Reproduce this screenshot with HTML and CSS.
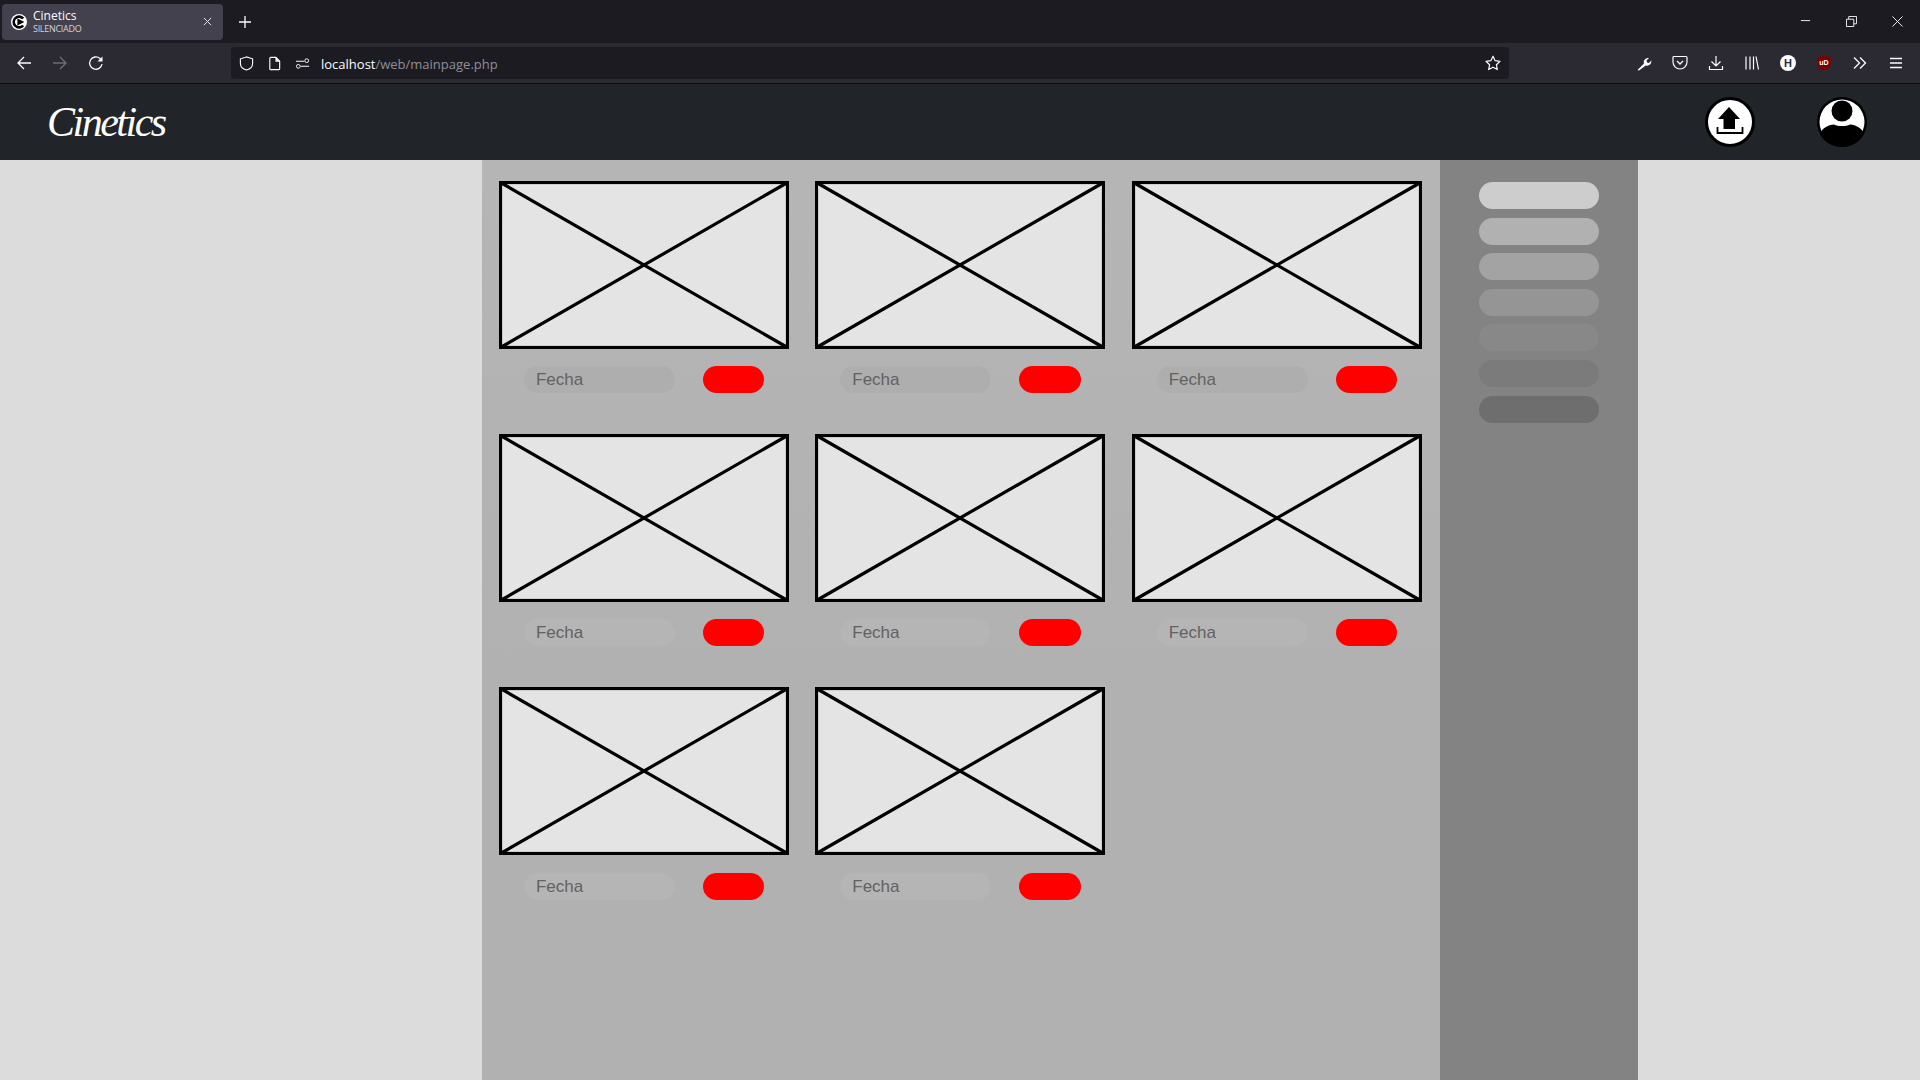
FILE: index.html
```html
<!DOCTYPE html>
<html lang="es">
  <head>
    <meta charset="UTF-8" />
    <title>Cinetics</title>
    <link rel="stylesheet" href="styles.css">
  </head>
  <body>
    <div class="tabbar">
      <div class="tab">
        <svg class="tab-icon" viewBox="0 0 16 16">
          <circle cx="8" cy="8" r="8" fill="#fff"/>
          <path d="M12.200 4.500A5.400 5.400 0 1 0 12.200 11.500" fill="none" stroke="#000" stroke-width="2.600"/>
          <path d="M6.400 4.600 13.400 8 6.400 11.400z" fill="#000"/>
        </svg>
        <div class="tab-text">
          <div class="tab-title">Cinetics</div>
          <div class="tab-sub">SILENCIADO</div>
        </div>
        <svg class="tab-close" viewBox="0 0 10 10"><path d="M1 1 9 9M9 1 1 9" stroke="#e6e6e8" stroke-width="1.100"/></svg>
      </div>
      <svg class="new-tab" viewBox="0 0 12 12"><path d="M6 0v12M0 6h12" stroke="#fbfbfe" stroke-width="1.300"/></svg>
      <div class="window-controls">
        <svg viewBox="0 0 12 12"><path d="M1 5h10" stroke="#fbfbfe" stroke-width="1"/></svg>
        <svg viewBox="0 0 12 12"><path d="M.5 3.500h8v8h-8zM3 3.500V.5h8.500v8H8.500" fill="none" stroke="#fbfbfe" stroke-width="1"/></svg>
        <svg viewBox="0 0 12 12"><path d="M.5.500l11 11M11.500.500l-11 11" stroke="#fbfbfe" stroke-width="1"/></svg>
      </div>
    </div>

    <div class="toolbar">
      <div class="nav-buttons">
        <svg viewBox="0 0 16 16"><path d="M15 8H2M8 2 2 8l6 6" fill="none" stroke="#fbfbfe" stroke-width="1.300"/></svg>
        <svg viewBox="0 0 16 16"><path d="M1 8h13M8 2l6 6-6 6" fill="none" stroke="#6f6e75" stroke-width="1.300"/></svg>
        <svg viewBox="0 0 16 16"><path d="M14 9A6.200 6.200 0 1 1 12 3.500L14 5.500" fill="none" stroke="#fbfbfe" stroke-width="1.300"/><path d="M14.500 1.500v5h-5z" fill="#fbfbfe"/></svg>
      </div>
      <div class="urlbar">
        <svg class="url-icon" viewBox="0 0 16 16"><path d="M8 1 1.500 3v5c0 3.500 3 6 6.500 7 3.500-1 6.500-3.500 6.500-7V3z" fill="none" stroke="#fbfbfe" stroke-width="1.200"/></svg>
        <svg class="url-icon" viewBox="0 0 16 16"><path d="M3 2.500A1 1 0 0 1 4 1.500h5.500l4 4V13.500a1 1 0 0 1-1 1H4a1 1 0 0 1-1-1z" fill="none" stroke="#fbfbfe" stroke-width="1.200"/><path d="M9 1.500h1l3.500 3.500v1H9z" fill="#fbfbfe"/></svg>
        <svg class="url-icon" viewBox="0 0 16 16"><path d="M1 5.500h9M6 11h9" stroke="#fbfbfe" stroke-width="1.100"/><circle cx="12.500" cy="5" r="2" fill="none" stroke="#fbfbfe"/><circle cx="3.500" cy="11" r="2" fill="none" stroke="#fbfbfe"/></svg>
        <div class="url-text"><span class="url-host">localhost</span>/web/mainpage.php</div>
        <svg class="url-star" viewBox="0 0 16 16"><path d="M8 1.200 10.100 5.700 15 6.300 11.400 9.700 12.300 14.600 8 12.200 3.700 14.600 4.600 9.700 1 6.300 5.900 5.700z" fill="none" stroke="#fbfbfe" stroke-width="1.200" stroke-linejoin="round"/></svg>
      </div>
      <div class="tool-icons">
        <svg viewBox="0 0 16 16"><path d="M1.500 15 8 8.500c-1-3 1.500-6 5-5.500L10.500 5.500 11 7.500l2 .5L15.300 5.500c.5 3.500-2.500 6-5.500 5L3 15.500z" fill="#fbfbfe"/></svg>
        <svg viewBox="0 0 16 16"><path d="M2 1.500h12a1 1 0 0 1 1 1V7A7 7 0 0 1 1 7V2.500a1 1 0 0 1 1-1z" fill="none" stroke="#fbfbfe" stroke-width="1.200"/><path d="M5 6l3 3 3-3" fill="none" stroke="#fbfbfe" stroke-width="1.300"/></svg>
        <svg viewBox="0 0 16 16"><path d="M8 1v9.500M3.500 6.500 8 11l4.500-4.500M1.500 11v3.500h13V11" fill="none" stroke="#fbfbfe" stroke-width="1.200"/></svg>
        <svg viewBox="0 0 16 16"><path d="M2 1.500v13M6 1.500v13M9.500 1.500v13M12 1.500l2.500 13" fill="none" stroke="#fbfbfe" stroke-width="1.200"/></svg>
        <div class="h-badge">H</div>
        <div class="ublock">
          <svg viewBox="0 0 16 16"><path d="M8 .5 1.300 2.500v5.500c0 3.500 3 6.300 6.700 7.500 3.700-1.200 6.700-4 6.700-7.500V2.500z" fill="#800000"/></svg>
          <span class="ublock-label">uD</span>
        </div>
        <svg viewBox="0 0 16 16"><path d="M2 2.500 7.500 8 2 13.500M8 2.500 13.500 8 8 13.500" fill="none" stroke="#fbfbfe" stroke-width="1.300"/></svg>
        <svg viewBox="0 0 16 16"><path d="M2 3.500h12M2 8h12M2 12.500h12" stroke="#fbfbfe" stroke-width="1.300"/></svg>
      </div>
    </div>

    <header class="site-header">
      <div class="logo">Cinetics</div>
      <div class="header-actions">
        <a class="round-btn">
          <svg viewBox="0 0 50 50">
            <circle cx="25" cy="25" r="23.500" fill="#fff" stroke="#000" stroke-width="3"/>
            <path d="M24 10 35 22H30V32H18.500V22H13z" fill="#000"/>
            <path d="M12.500 30V36H37.500V30" fill="none" stroke="#000" stroke-width="1.800"/>
          </svg>
        </a>
        <a class="round-btn">
          <svg viewBox="0 0 50 50">
            <circle cx="25" cy="25" r="25" fill="#000"/>
            <circle cx="25" cy="25" r="22.500" fill="#fff"/>
            <circle cx="25" cy="14" r="10.500" fill="#000"/>
            <path d="M3 37C5 31 11 28 17 27.500 21 29.500 29 29.500 33 27.500 39 28 45 31 47 37 43 45 34 50 25 50 16 50 7 45 3 37z" fill="#000"/>
          </svg>
        </a>
      </div>
    </header>

    <div class="page">
      <main class="content">
        <div class="grid">
          <div class="card">
            <svg class="thumb" viewBox="0 0 290 168"><rect x="1.500" y="1.500" width="287" height="165"/><path d="M1.500 1.500 288.500 166.500M288.500 1.500 1.500 166.500"/></svg>
            <div class="card-info"><div class="date-pill">Fecha</div><div class="red-pill"></div></div>
          </div>
          <div class="card">
            <svg class="thumb" viewBox="0 0 290 168"><rect x="1.500" y="1.500" width="287" height="165"/><path d="M1.500 1.500 288.500 166.500M288.500 1.500 1.500 166.500"/></svg>
            <div class="card-info"><div class="date-pill">Fecha</div><div class="red-pill"></div></div>
          </div>
          <div class="card">
            <svg class="thumb" viewBox="0 0 290 168"><rect x="1.500" y="1.500" width="287" height="165"/><path d="M1.500 1.500 288.500 166.500M288.500 1.500 1.500 166.500"/></svg>
            <div class="card-info"><div class="date-pill">Fecha</div><div class="red-pill"></div></div>
          </div>
          <div class="card">
            <svg class="thumb" viewBox="0 0 290 168"><rect x="1.500" y="1.500" width="287" height="165"/><path d="M1.500 1.500 288.500 166.500M288.500 1.500 1.500 166.500"/></svg>
            <div class="card-info"><div class="date-pill">Fecha</div><div class="red-pill"></div></div>
          </div>
          <div class="card">
            <svg class="thumb" viewBox="0 0 290 168"><rect x="1.500" y="1.500" width="287" height="165"/><path d="M1.500 1.500 288.500 166.500M288.500 1.500 1.500 166.500"/></svg>
            <div class="card-info"><div class="date-pill">Fecha</div><div class="red-pill"></div></div>
          </div>
          <div class="card">
            <svg class="thumb" viewBox="0 0 290 168"><rect x="1.500" y="1.500" width="287" height="165"/><path d="M1.500 1.500 288.500 166.500M288.500 1.500 1.500 166.500"/></svg>
            <div class="card-info"><div class="date-pill">Fecha</div><div class="red-pill"></div></div>
          </div>
          <div class="card">
            <svg class="thumb" viewBox="0 0 290 168"><rect x="1.500" y="1.500" width="287" height="165"/><path d="M1.500 1.500 288.500 166.500M288.500 1.500 1.500 166.500"/></svg>
            <div class="card-info"><div class="date-pill">Fecha</div><div class="red-pill"></div></div>
          </div>
          <div class="card">
            <svg class="thumb" viewBox="0 0 290 168"><rect x="1.500" y="1.500" width="287" height="165"/><path d="M1.500 1.500 288.500 166.500M288.500 1.500 1.500 166.500"/></svg>
            <div class="card-info"><div class="date-pill">Fecha</div><div class="red-pill"></div></div>
          </div>
        </div>
      </main>
      <aside class="sidebar">
        <div class="side-pill shade-1"></div>
        <div class="side-pill shade-2"></div>
        <div class="side-pill shade-3"></div>
        <div class="side-pill shade-4"></div>
        <div class="side-pill shade-5"></div>
        <div class="side-pill shade-6"></div>
        <div class="side-pill shade-7"></div>
      </aside>
    </div>
  </body>
</html>
```

FILE: styles.css
```css
html,
body {
  height: 100%;
}
body {
  margin: 0;
  display: flex;
  flex-direction: column;
  overflow: hidden;
  background-color: #dcdcdc;
  font-family: "Liberation Sans", Arial, sans-serif;
}

/* browser chrome */
.tabbar {
  height: 43px;
  flex: none;
  display: flex;
  align-items: center;
  background-color: #1c1b22;
  color: #fbfbfe;
  font-family: "Open Sans", "Noto Sans", sans-serif;
}
.tab {
  width: 221px;
  height: 36px;
  margin-left: 2px;
  box-sizing: border-box;
  padding: 0 11px 0 9px;
  display: flex;
  align-items: center;
  background-color: #42414d;
  border-radius: 4px;
}
.tab-icon {
  width: 16px;
  height: 16px;
  margin-right: 6px;
}
.tab-text {
  flex: 1;
  margin-top: -1px;
}
.tab-title {
  font-size: 12px;
  line-height: 15px;
}
.tab-sub {
  font-size: 9px;
  line-height: 12px;
  color: #d4d4d8;
  letter-spacing: -0.3px;
}
.tab-close {
  width: 9px;
  height: 9px;
}
.new-tab {
  width: 12px;
  height: 12px;
  margin-left: 16px;
}
.window-controls {
  margin-left: auto;
  margin-right: 17px;
  display: flex;
  gap: 35px;
}
.window-controls svg {
  width: 11px;
  height: 11px;
  display: block;
}

.toolbar {
  height: 40px;
  flex: none;
  display: flex;
  align-items: center;
  background-color: #2b2a33;
  border-bottom: 1px solid #0c0c0d;
}
.nav-buttons {
  width: 231px;
  flex: none;
  box-sizing: border-box;
  padding-left: 16px;
  display: flex;
  gap: 20px;
}
.nav-buttons svg {
  width: 16px;
  height: 16px;
  display: block;
}
.urlbar {
  width: 1278px;
  height: 32px;
  flex: none;
  box-sizing: border-box;
  padding: 0 8px;
  display: flex;
  align-items: center;
  gap: 13px;
  background-color: #1c1b22;
  border-radius: 4px;
}
.url-icon {
  width: 15px;
  height: 15px;
  flex: none;
}
.url-text {
  flex: 1;
  margin-left: -2px;
  padding-top: 1px;
  font-family: "Open Sans", "Noto Sans", sans-serif;
  font-size: 13px;
  color: #8f8f94;
}
.url-host {
  color: #fbfbfe;
}
.url-star {
  width: 16px;
  height: 16px;
}
.tool-icons {
  flex: 1;
  padding-left: 127px;
  display: flex;
  align-items: center;
  gap: 20px;
}
.tool-icons svg {
  width: 16px;
  height: 16px;
  display: block;
}
.h-badge {
  width: 16px;
  height: 16px;
  border-radius: 50%;
  background-color: #fbfbfe;
  color: #2b2a33;
  font-size: 11px;
  font-weight: bold;
  line-height: 16px;
  text-align: center;
}
.ublock {
  position: relative;
  width: 16px;
  height: 16px;
}
.ublock-label {
  position: absolute;
  left: 0;
  right: 0;
  top: 3px;
  text-align: center;
  color: #fff;
  font-size: 7px;
  font-weight: bold;
  line-height: 9px;
}

/* site */
.site-header {
  height: 76px;
  flex: none;
  box-sizing: border-box;
  padding: 0 53px 0 47px;
  display: flex;
  align-items: center;
  justify-content: space-between;
  background-color: #212529;
}
.logo {
  font-family: "Liberation Serif", serif;
  font-style: italic;
  font-size: 42px;
  letter-spacing: -2.5px;
  color: #fff;
}
.header-actions {
  display: flex;
  gap: 62px;
}
.round-btn {
  display: block;
  width: 50px;
  height: 50px;
}
.round-btn svg {
  display: block;
  width: 50px;
  height: 50px;
}

.page {
  flex: 1;
  display: flex;
  padding-left: 482px;
  min-height: 0;
}
.content {
  width: 958px;
  box-sizing: border-box;
  padding: 20.8px 0 0 17px;
  background: linear-gradient(#b5b5b5, #b1b1b1 60%);
}
.grid {
  display: grid;
  grid-template-columns: repeat(3, 290px);
  column-gap: 26.4px;
}
.card {
  height: 253.3px;
}
.thumb {
  display: block;
  width: 290px;
  height: 168px;
  fill: #e4e4e4;
  stroke: #000;
  stroke-width: 3.2;
}
.thumb path {
  fill: none;
}
.card-info {
  margin-top: 17.2px;
  padding-left: 24.9px;
  display: flex;
  gap: 28px;
}
.date-pill {
  width: 151px;
  height: 27px;
  box-sizing: border-box;
  padding-left: 12px;
  background-color: #b5b5b5;
  border-radius: 14px;
  color: #626262;
  font-size: 17px;
  line-height: 28px;
}
.card:nth-child(-n+3) .date-pill {
  background-color: #aeaeae;
}
.red-pill {
  width: 61.5px;
  height: 27px;
  background-color: #f00;
  border-radius: 14px;
}
.sidebar {
  width: 198px;
  box-sizing: border-box;
  padding: 22px 39px 0 39px;
  display: flex;
  flex-direction: column;
  gap: 8.6px;
  background-color: #838383;
}
.side-pill {
  height: 27px;
  border-radius: 14px;
}
.shade-1 { background-color: #cdcdcd; }
.shade-2 { background-color: #b1b1b1; }
.shade-3 { background-color: #a3a3a3; }
.shade-4 { background-color: #959595; }
.shade-5 { background-color: #888888; }
.shade-6 { background-color: #7b7b7b; }
.shade-7 { background-color: #6e6e6e; }
```
